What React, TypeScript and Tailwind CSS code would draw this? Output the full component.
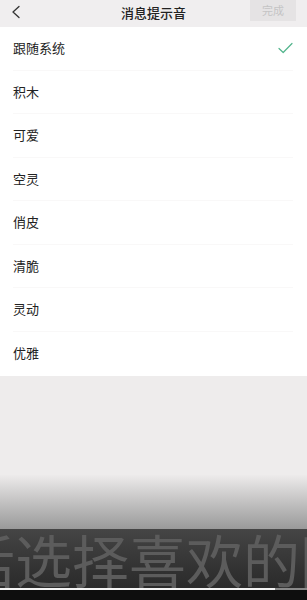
const tones = ["跟随系统", "积木", "可爱", "空灵", "俏皮", "清脆", "灵动", "优雅"];

const cjk = { fontFamily: '"Noto Sans CJK SC", "Noto Sans", sans-serif' };

export default function App() {
  return (
    <div className="flex h-[600px] w-[307px] flex-col overflow-hidden bg-[#eeecec]" style={cjk}>
      {/* Header */}
      <div className="relative flex h-[27px] shrink-0 items-center justify-center bg-[#f0eeef] pb-[2px]">
        <svg className="absolute left-[11px] top-[5px]" width="10" height="14" viewBox="0 0 10 14" fill="none">
          <path d="M8 1.5L2 7l6 5.5" stroke="#333" strokeWidth="1.3" strokeLinecap="round" strokeLinejoin="round" />
        </svg>
        <span className="text-[13px] font-medium leading-none text-[#222]">消息提示音</span>
        <div className="absolute right-[11px] top-0 flex h-[21px] w-[46px] items-center justify-center bg-[#e5e3e4] text-[11px] text-[#c4c4c4]">
          完成
        </div>
      </div>

      {/* List */}
      <div className="flex shrink-0 flex-col bg-white pb-[1px]">
        {tones.map((t, i) => (
          <div key={t} className="relative flex h-[43.5px] items-center pb-[2px] pl-[13px] pr-[14px]">
            <span className="flex-1 text-[13px] leading-none text-[#222]">{t}</span>
            {i === 0 && (
              <svg width="15" height="12" viewBox="0 0 15 12" fill="none">
                <path d="M1 6.5l4.2 4L14 1.5" stroke="#52b48c" strokeWidth="1.2" strokeLinecap="round" strokeLinejoin="round" />
              </svg>
            )}
            {i < tones.length - 1 && (
              <div className="absolute bottom-0 left-[13px] right-[14px] h-px bg-[#f9f8f8]" />
            )}
          </div>
        ))}
      </div>

      {/* Empty area */}
      <div className="h-[99px] shrink-0 bg-[#eeecec]" />
      <div className="h-[54px] shrink-0 bg-gradient-to-b from-[#edebeb] to-[#9a9a9a]" />

      {/* Subtitle band */}
      <div className="flex h-[59px] shrink-0 items-center overflow-hidden whitespace-nowrap bg-gradient-to-b from-[#454545] to-[#2a2a2a]">
        <span className="ml-[-42px] text-[57px] leading-none text-[#5c5c5c]">话选择喜欢的圈</span>
      </div>
      <div className="flex h-[2px] shrink-0">
        <div className="w-[275px] bg-[#f4f4f4]" />
        <div className="flex-1 bg-[#8a8a8a]" />
      </div>
      <div className="flex-1 bg-[#0e0e0e]" />
    </div>
  );
}
